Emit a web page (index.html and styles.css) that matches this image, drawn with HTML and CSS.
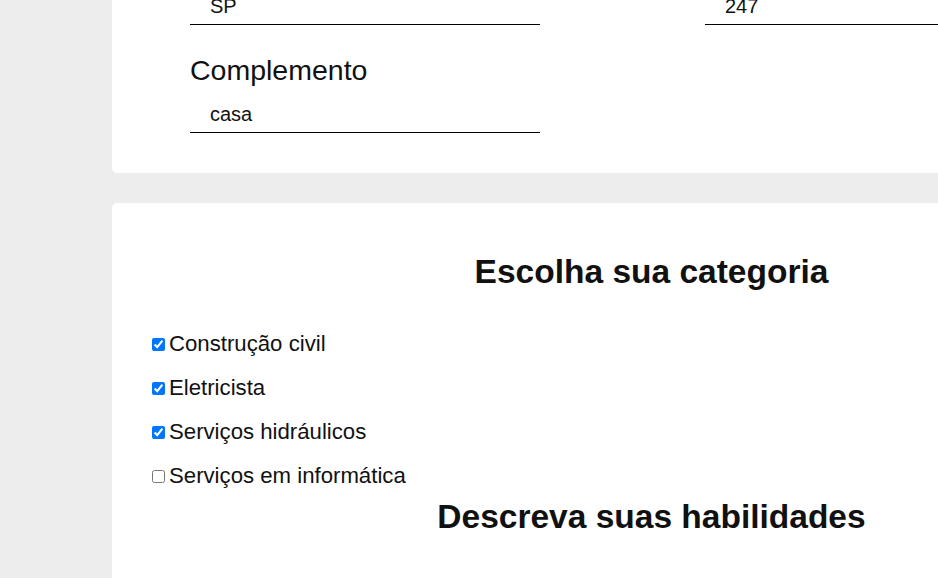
FILE: index.html
```html
<!DOCTYPE html>
<html lang="pt-BR">
<head>
<meta charset="utf-8">
<title>Cadastro</title>
<link rel="stylesheet" href="styles.css">
</head>
<body>
<div class="page">
  <section class="card card-address">
    <div class="field-row">
      <div class="field">
        <label class="field-label" for="estado">Estado</label>
        <input class="field-input" id="estado" type="text" value="SP">
      </div>
      <div class="field">
        <label class="field-label" for="numero">Número</label>
        <input class="field-input" id="numero" type="text" value="247">
      </div>
    </div>
    <div class="field-row">
      <div class="field">
        <label class="field-label" for="complemento">Complemento</label>
        <input class="field-input" id="complemento" type="text" value="casa">
      </div>
    </div>
  </section>

  <section class="card card-category">
    <h2 class="section-title">Escolha sua categoria</h2>
    <div class="check-list">
      <label class="check-item"><input type="checkbox" checked>Construção civil</label>
      <label class="check-item"><input type="checkbox" checked>Eletricista</label>
      <label class="check-item"><input type="checkbox" checked>Serviços hidráulicos</label>
      <label class="check-item"><input type="checkbox">Serviços em informática</label>
    </div>
    <h2 class="section-title section-title-skills">Descreva suas habilidades</h2>
  </section>
</div>
</body>
</html>
```

FILE: styles.css
```css
html, body {
  margin: 0;
  padding: 0;
  background: #ededed;
  overflow: hidden;
}

body {
  font-family: Arial, "Liberation Sans", sans-serif;
  color: #111;
  width: 938px;
  height: 578px;
}

.page {
  margin-top: -94px;
  padding-left: 112px;
  display: flex;
  flex-direction: column;
  gap: 30px;
}

.card {
  background: #fff;
  border-radius: 5px;
  width: 1079px;
  box-sizing: border-box;
  flex-shrink: 0;
}

.card-address {
  padding: 40px 78px 40px 78px;
  display: flex;
  flex-direction: column;
  gap: 29px;
}

.field-row {
  display: flex;
  gap: 165px;
}

.field {
  display: flex;
  flex-direction: column;
  gap: 10px;
  width: 350px;
}

.field-label {
  font-size: 28.5px;
  line-height: 33px;
  color: #111;
}

.field-input {
  font-family: Arial, "Liberation Sans", sans-serif;
  font-size: 20px;
  line-height: 23px;
  padding: 6px 20px;
  border: none;
  border-bottom: 1px solid #000;
  outline: none;
  background: transparent;
  color: #111;
  width: 100%;
  box-sizing: border-box;
  margin: 0;
}

.card-category {
  padding: 50px 36px 40px 36px;
  min-height: 420px;
}

.section-title {
  margin: 0;
  text-align: center;
  font-size: 33.5px;
  line-height: 38px;
  font-weight: bold;
  color: #111;
}

.check-list {
  display: flex;
  flex-direction: column;
  gap: 19px;
  margin-top: 40px;
  margin-bottom: 10px;
}

.check-item {
  display: flex;
  align-items: center;
  height: 25px;
  font-size: 22.2px;
  color: #111;
}

.check-item input {
  margin: 2px 4px 0 4px;
  width: 13px;
  height: 13px;
}
```
